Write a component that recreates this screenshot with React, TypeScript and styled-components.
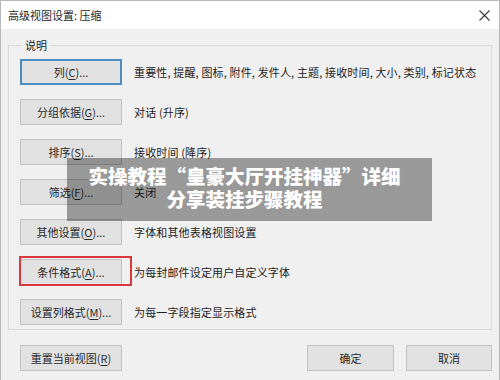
import React from 'react'
import styled, { createGlobalStyle } from 'styled-components'

const GlobalStyle = createGlobalStyle`
  html, body {
    margin: 0;
    padding: 0;
    background: #f0f0f0;
  }
  body {
    font-family: "Noto Sans CJK SC", "Noto Sans", sans-serif;
  }
`

interface Row {
  label: string
  key: string
  desc: string
}

const rows: Row[] = [
  { label: '列', key: 'C', desc: '重要性, 提醒, 图标, 附件, 发件人, 主题, 接收时间, 大小, 类别, 标记状态' },
  { label: '分组依据', key: 'G', desc: '对话 (升序)' },
  { label: '排序', key: 'S', desc: '接收时间 (降序)' },
  { label: '筛选', key: 'F', desc: '关闭' },
  { label: '其他设置', key: 'O', desc: '字体和其他表格视图设置' },
  { label: '条件格式', key: 'A', desc: '为每封邮件设定用户自定义字体' },
  { label: '设置列格式', key: 'M', desc: '为每一字段指定显示格式' },
]

const App: React.FC = () => (
  <>
    <GlobalStyle />
    <Window>
      <TitleBar>
        <Title>高级视图设置: 压缩</Title>
        <CloseButton type="button" aria-label="关闭">
          <svg width="11" height="11" viewBox="0 0 11 11">
            <path d="M0.5 0.5 L10.5 10.5 M10.5 0.5 L0.5 10.5" stroke="#3a3a3a" strokeWidth="1.1" />
          </svg>
        </CloseButton>
      </TitleBar>
      <Body>
        <Group>
          <Legend>说明</Legend>
          {rows.map((row, i) => (
            <SettingRow key={row.key}>
              <DialogButton type="button" $focused={i === 0} $width={102}>
                {row.label}(<u>{row.key}</u>)...
              </DialogButton>
              <Desc>{row.desc}</Desc>
              {row.key === 'A' && <Highlight />}
            </SettingRow>
          ))}
        </Group>
        <Footer>
          <DialogButton type="button" $width={102}>
            重置当前视图(<u>R</u>)
          </DialogButton>
          <Spacer />
          <DialogButton type="button" $width={87}>
            确定
          </DialogButton>
          <DialogButton type="button" $width={86}>
            取消
          </DialogButton>
        </Footer>
      </Body>
      <Banner>
        实操教程“皇豪大厅开挂神器”详细
        <br />
        分享装挂步骤教程
      </Banner>
    </Window>
  </>
)

const Window = styled('div')`
  position: relative;
  width: 500px;
  height: 380px;
  box-sizing: border-box;
  border: 1px solid #b9b9b9;
  border-bottom: none;
  background: #f0f0f0;
  overflow: hidden;
`

const TitleBar = styled('div')`
  display: flex;
  align-items: center;
  justify-content: space-between;
  height: 28px;
  padding: 0 9px 0 7px;
  background: #ffffff;
`

const Title = styled('span')`
  font-size: 11px;
  color: #1e1e1e;
`

const CloseButton = styled('button')`
  display: flex;
  align-items: center;
  justify-content: center;
  padding: 0;
  border: none;
  background: transparent;
`

const Body = styled('div')`
  padding: 8px 7px 0 7px;
`

const Group = styled('fieldset')`
  display: flex;
  flex-direction: column;
  gap: 14px;
  margin: 0;
  padding: 6px 10px 4px 11px;
  border: 1px solid #dadada;
  border-radius: 0;
`

const Legend = styled('legend')`
  margin-left: 3px;
  padding: 0 2px;
  font-size: 11px;
  line-height: 16px;
  color: #1e1e1e;
`

const SettingRow = styled('div')`
  position: relative;
  display: flex;
  align-items: center;
  gap: 12px;
`

const DialogButton = styled('button')<{ $focused?: boolean; $width: number }>`
  flex: none;
  width: ${(p) => p.$width}px;
  height: 26px;
  box-sizing: border-box;
  padding: 0;
  font-family: "Noto Sans CJK SC", "Noto Sans", sans-serif;
  font-size: 11px;
  color: #2a2a2a;
  background: #e1e1e1;
  border: ${(p) => (p.$focused ? '2px solid #4d8cc0' : '1px solid #c2c2c2')};

  u {
    text-underline-offset: 2px;
  }
`

const Desc = styled('span')`
  font-size: 11px;
  letter-spacing: 0.15px;
  color: #1e1e1e;
  white-space: nowrap;
`

const Highlight = styled('div')`
  position: absolute;
  left: -1px;
  top: -3px;
  width: 113px;
  height: 30px;
  box-sizing: border-box;
  border: 2px solid #d9373c;
  pointer-events: none;
`

const Footer = styled('div')`
  display: flex;
  gap: 12px;
  margin-top: 15px;
  padding-left: 12px;
`

const Spacer = styled('div')`
  flex: 1;
`

const Banner = styled('div')`
  position: absolute;
  left: 66px;
  top: 157px;
  width: 365px;
  height: 63px;
  box-sizing: border-box;
  padding: 6px 10px 0 0;
  background: rgba(0, 0, 0, 0.36);
  color: #ffffff;
  font-size: 19.5px;
  font-weight: 900;
  line-height: 23px;
  text-align: center;
  font-feature-settings: "fwid";
`

export default App
